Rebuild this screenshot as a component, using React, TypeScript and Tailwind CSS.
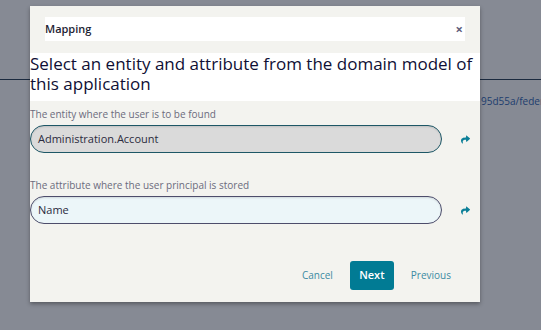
import { FaShare } from "react-icons/fa";

const font = { fontFamily: '"Open Sans", "Noto Sans", sans-serif' };

function Field({ label, value, tone }: { label: string; value: string; tone: "grey" | "light" }) {
  const box =
    tone === "grey"
      ? "bg-[#dadada] border-[#1d5766]"
      : "bg-[#ecf6f9] border-[#4d4d6b]";
  return (
    <div className="flex flex-col">
      <div className="h-[14px] text-[10px] leading-[14px] text-[#6b6b7d]">{label}</div>
      <div className="mt-[4px] flex items-center">
        <div
          className={`flex h-[28px] w-[412px] items-center rounded-full border px-[7px] text-[11px] text-[#2b2b3d] shadow-[inset_0_1px_2px_rgba(0,0,0,0.12)] ${box}`}
        >
          {value}
        </div>
        <FaShare className="ml-[19px] text-[#0b7f98]" size={9} />
      </div>
    </div>
  );
}

export default function App() {
  return (
    <div className="relative h-[330px] w-[541px] overflow-hidden bg-[#868a94]" style={font}>
      <div className="h-[80px] border-b border-[#1b2a3f]" />
      <div className="whitespace-nowrap pl-[481px] pt-[14px] text-[10px] leading-[14px] text-[#1d3d6e]">95d55a/feder</div>

      <div className="absolute left-[30px] top-[6px] flex h-[296px] w-[450px] flex-col bg-[#f3f3ef] shadow-[0_2px_4px_rgba(0,0,0,0.35)]">
        <div className="mx-[15px] mt-[11px] flex h-[24px] items-center justify-between bg-white">
          <span className="text-[11px] font-semibold text-[#1e1e33]">Mapping</span>
          <span className="mr-[2px] text-[13px] font-bold leading-none text-[#5d5d7b]">×</span>
        </div>

        <div className="mt-[12px] h-[48px] bg-white pt-[1px] text-[17px] font-medium leading-[20px] text-[#0f0f35]">
          Select an entity and attribute from the domain model of this application
        </div>

        <div className="mt-[6px] flex flex-col gap-[25px]">
          <Field label="The entity where the user is to be found" value="Administration.Account" tone="grey" />
          <Field label="The attribute where the user principal is stored" value="Name" tone="light" />
        </div>

        <div className="mt-[37px] flex items-center justify-end pr-[29px] text-[10px] text-[#3c8aa2]">
          <span>Cancel</span>
          <button className="ml-[17px] flex h-[29px] w-[44px] items-center justify-center rounded-[3px] bg-[#017b94] text-[11px] font-semibold text-white">
            Next
          </button>
          <span className="ml-[17px]">Previous</span>
        </div>
      </div>
    </div>
  );
}
